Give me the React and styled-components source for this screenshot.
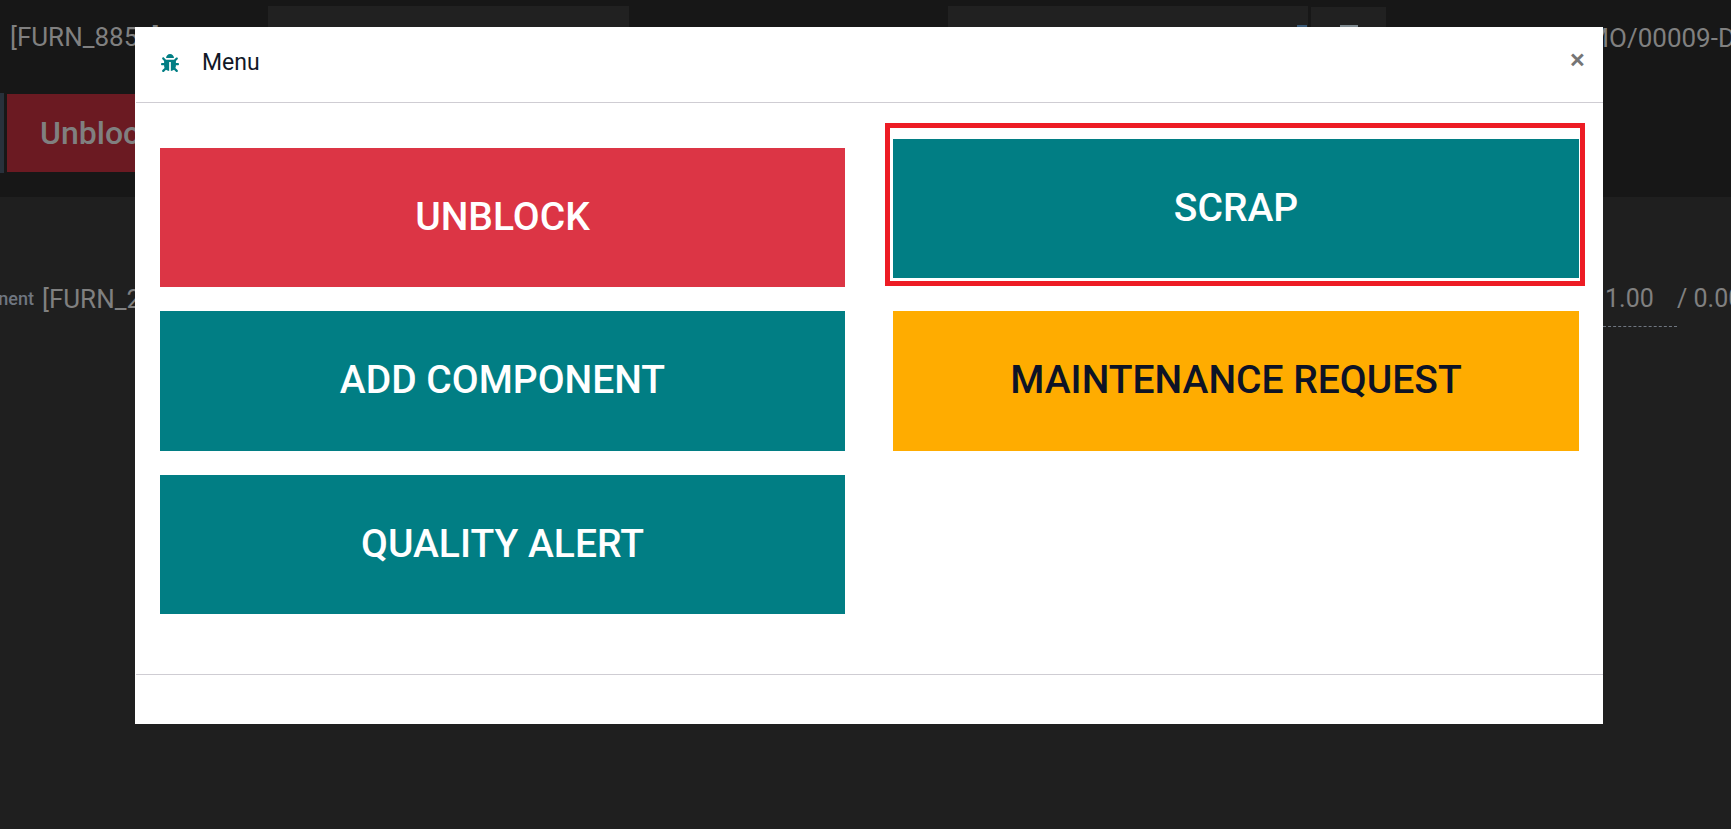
import React from "react";
import styled, { createGlobalStyle } from "styled-components";
import { FaBug } from "react-icons/fa";

const GlobalStyle = createGlobalStyle`
  html, body {
    margin: 0;
    height: 100%;
    background: #1f1f1f;
    overflow: hidden;
  }
  * {
    box-sizing: border-box;
  }
  body {
    font-family: Roboto, "Liberation Sans", sans-serif;
  }
`;

const Page = styled.div`
  position: relative;
  width: 1731px;
  height: 829px;
  overflow: hidden;
  background: #1f1f1f;
`;

const TopBar = styled.header`
  height: 197px;
  background: #171717;
  padding: 6px 0 0 10px;
`;

const InfoRow = styled.div`
  display: flex;
  align-items: flex-start;
  height: 87px;
`;

const ProductName = styled.div`
  flex: none;
  width: 258px;
  padding-top: 16px;
  font-size: 26px;
  line-height: 30px;
  color: #808080;
  white-space: nowrap;
`;

const FieldBox = styled.div`
  display: flex;
  justify-content: ${(p) => (p.$center ? "center" : "flex-end")};
  flex: none;
  width: ${(p) => p.$width}px;
  height: 70px;
  margin-top: ${(p) => p.$top || 0}px;
  margin-right: ${(p) => p.$gap || 0}px;
  padding-top: ${(p) => 19 - (p.$top || 0)}px;
  background: #212121;
`;

const DropdownMark = styled.span`
  width: 10px;
  height: 10px;
  margin-right: 1px;
  background: #3a5a78;
`;

const ToolMark = styled.span`
  width: 18px;
  height: 10px;
  background: #7f8a90;
`;

const OrderName = styled.div`
  flex: none;
  margin-left: 148px;
  padding-top: 17px;
  font-size: 26px;
  line-height: 30px;
  color: #808080;
  white-space: nowrap;
`;

const ActionRow = styled.div`
  display: flex;
  align-items: center;
  gap: 3px;
  margin-left: -10px;
`;

const ActionEdge = styled.div`
  width: 4px;
  height: 80px;
  background: #28313b;
`;

const UnblockBack = styled.div`
  width: 300px;
  height: 78px;
  padding-left: 33px;
  background: #6b1a22;
  color: #808080;
  font-size: 32px;
  font-weight: 500;
  line-height: 78px;
`;

const ComponentRow = styled.div`
  display: flex;
  align-items: flex-start;
  height: 44px;
  margin-top: 86px;
  color: #808080;
  line-height: 32px;
`;

const ComponentLabel = styled.span`
  flex: none;
  width: 34px;
  margin-right: 8px;
  overflow: hidden;
  direction: rtl;
  font-size: 18px;
  font-weight: 500;
  color: #6f7680;
`;

const ComponentName = styled.span`
  font-size: 26px;
`;

const QtyBlock = styled.div`
  display: flex;
  flex: none;
  width: 128px;
  margin-left: auto;
  font-size: 25px;
  white-space: nowrap;
`;

const QtyValue = styled.span`
  flex: none;
  width: 74px;
  height: 44px;
  padding-left: 2px;
  border-bottom: 1px dashed #6f7680;
`;

const Modal = styled.section`
  position: absolute;
  left: 135px;
  top: 27px;
  width: 1468px;
  height: 697px;
  background: #fff;
  display: flex;
  flex-direction: column;
`;

const ModalHeader = styled.div`
  display: flex;
  align-items: center;
  height: 76px;
  padding: 0 18px 4px 25px;
  margin-left: 1px;
  border-bottom: 1px solid #cfcdd3;
`;

const BugIcon = styled(FaBug)`
  width: 18px;
  height: 18px;
  color: #017e84;
  margin-right: 23px;
`;

const ModalTitle = styled.h4`
  margin: 0;
  font-size: 23px;
  font-weight: 400;
  color: #111827;
`;

const CloseButton = styled.button`
  margin-left: auto;
  padding: 0 0 6px;
  border: 0;
  background: none;
  font-family: inherit;
  font-size: 28px;
  line-height: 28px;
  font-weight: 500;
  color: #757575;
`;

const ModalBody = styled.div`
  flex: 1;
  display: grid;
  grid-template-columns: 685px 686px;
  grid-template-rows: 139px 140px 139px;
  column-gap: 48px;
  row-gap: 24px;
  align-content: start;
  padding: 45px 24px 0 25px;
`;

const ActionButton = styled.button`
  flex: 1;
  border: 0;
  padding: 0 0 2px;
  background: ${(p) => p.$bg};
  color: ${(p) => p.$fg || "#fff"};
  font-family: inherit;
  font-size: 39px;
  font-weight: 500;
`;

const HighlightCell = styled.div`
  position: relative;
  display: flex;
  margin-top: -9px;
  margin-bottom: 9px;
`;

const HighlightFrame = styled.div`
  position: absolute;
  top: -16px;
  left: -8px;
  right: -6px;
  bottom: -8px;
  border: 5px solid #ed1c24;
  pointer-events: none;
`;

const ModalFooter = styled.div`
  height: 50px;
  margin-left: 1px;
  border-top: 1px solid #cfcdd3;
`;

export default function App() {
  return (
    <Page>
      <GlobalStyle />
      <TopBar>
        <InfoRow>
          <ProductName>[FURN_8855]</ProductName>
          <FieldBox $width={361} $gap={319} />
          <FieldBox $width={360} $gap={3}>
            <DropdownMark />
          </FieldBox>
          <FieldBox $width={75} $top={1} $center>
            <ToolMark />
          </FieldBox>
          <OrderName>WH/MO/00009-D</OrderName>
        </InfoRow>
        <ActionRow>
          <ActionEdge />
          <UnblockBack>Unblock</UnblockBack>
        </ActionRow>
      </TopBar>
      <ComponentRow>
        <ComponentLabel>Component</ComponentLabel>
        <ComponentName>[FURN_2333]</ComponentName>
        <QtyBlock>
          <QtyValue>1.00</QtyValue>
          <span>/ 0.00</span>
        </QtyBlock>
      </ComponentRow>
      <Modal>
        <ModalHeader>
          <BugIcon />
          <ModalTitle>Menu</ModalTitle>
          <CloseButton>×</CloseButton>
        </ModalHeader>
        <ModalBody>
          <ActionButton $bg="#dc3545">UNBLOCK</ActionButton>
          <HighlightCell>
            <ActionButton $bg="#017e84">SCRAP</ActionButton>
            <HighlightFrame />
          </HighlightCell>
          <ActionButton $bg="#017e84">ADD COMPONENT</ActionButton>
          <ActionButton $bg="#ffac00" $fg="#0d1326">MAINTENANCE REQUEST</ActionButton>
          <ActionButton $bg="#017e84">QUALITY ALERT</ActionButton>
        </ModalBody>
        <ModalFooter />
      </Modal>
    </Page>
  );
}
